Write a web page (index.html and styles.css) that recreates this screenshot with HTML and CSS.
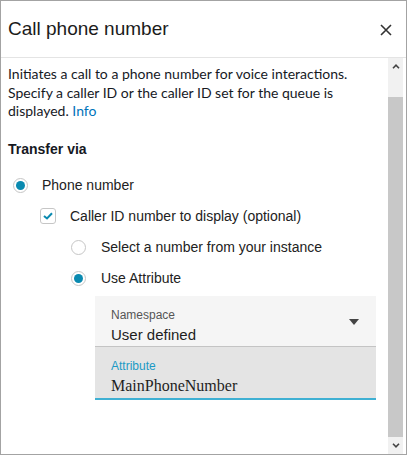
FILE: index.html
```html
<!DOCTYPE html>
<html>
<head>
<meta charset="utf-8">
<link rel="stylesheet" href="styles.css">
</head>
<body>
<div class="panel">
  <div class="header">
    <div class="title">Call phone number</div>
    <svg class="close" width="12" height="12" viewBox="0 0 12 12"><path d="M1 1L11 11M11 1L1 11" stroke="#333" stroke-width="1.6" fill="none"/></svg>
  </div>
  <div class="main">
    <div class="content">
      <p class="desc">Initiates a call to a phone number for voice interactions. Specify a caller ID or the caller ID set for the queue is displayed. <span class="link">Info</span></p>
      <div class="heading">Transfer via</div>
      <div class="row lvl1"><span class="radio on"></span><span class="label">Phone number</span></div>
      <div class="row lvl2"><span class="check"><svg width="10" height="8" viewBox="0 0 10 8"><path d="M1 4L4 6.5L9 1.2" stroke="#0a8ab0" stroke-width="2" fill="none"/></svg></span><span class="label">Caller ID number to display (optional)</span></div>
      <div class="row lvl3"><span class="radio"></span><span class="label">Select a number from your instance</span></div>
      <div class="row lvl3"><span class="radio on"></span><span class="label">Use Attribute</span></div>
      <div class="fields">
        <div class="field select">
          <div class="flabel">Namespace</div>
          <div class="fvalue">User defined</div>
          <span class="caret"></span>
        </div>
        <div class="field input">
          <div class="flabel">Attribute</div>
          <div class="fvalue serif">MainPhoneNumber</div>
        </div>
      </div>
    </div>
    <div class="scrollbar">
      <div class="sb-btn"><svg width="8" height="5" viewBox="0 0 8 5"><path d="M1 4.2L4 1.2L7 4.2" stroke="#444" stroke-width="1.6" fill="none"/></svg></div>
      <div class="sb-space"></div>
      <div class="sb-thumb"></div>
      <div class="sb-btn down"><svg width="8" height="5" viewBox="0 0 8 5"><path d="M1 0.8L4 3.8L7 0.8" stroke="#444" stroke-width="1.6" fill="none"/></svg></div>
    </div>
  </div>
</div>
</body>
</html>
```

FILE: styles.css
```css
html, body {
  margin: 0;
  padding: 0;
  background: #fff;
}
body {
  font-family: "Liberation Sans", Arial, sans-serif;
  color: #16191f;
}
.panel {
  width: 405px;
  height: 453px;
  border: 1px solid #a3a3a3;
  display: flex;
  flex-direction: column;
  overflow: hidden;
}
.header {
  height: 56px;
  flex: none;
  border-bottom: 1px solid #e4e4e4;
  display: flex;
  align-items: center;
  justify-content: space-between;
  padding: 0 14px 0 7px;
}
.title {
  font-size: 19px;
  color: #1b1b1b;
}
.close {
  display: block;
  margin-top: 1px;
}
.main {
  flex: 1;
  display: flex;
  min-height: 0;
}
.content {
  flex: 1;
  padding: 7px 0 0 7px;
}
.desc {
  margin: 0;
  font-family: Lato, "Liberation Sans", sans-serif;
  font-size: 14px;
  line-height: 18.5px;
  color: #16191f;
  padding-right: 8px;
}
.link {
  color: #0073bb;
}
.heading {
  margin-top: 19px;
  font-weight: bold;
  font-size: 14px;
  line-height: 18px;
}
.row {
  height: 31px;
  display: flex;
  align-items: center;
  font-size: 14px;
  color: #222;
}
.heading + .row {
  margin-top: 12px;
}
.lvl1 { padding-left: 5px; }
.lvl2 { padding-left: 32px; }
.lvl3 { padding-left: 63px; }
.radio {
  width: 15px;
  height: 15px;
  box-sizing: border-box;
  border: 1px solid #c6c6c6;
  border-radius: 50%;
  background: #fff;
  margin-right: 14px;
  display: flex;
  align-items: center;
  justify-content: center;
  flex: none;
}
.radio.on::after {
  content: "";
  width: 9px;
  height: 9px;
  border-radius: 50%;
  background: #0a8ab0;
}
.lvl3 .radio { margin-right: 15px; }
.check {
  width: 16px;
  height: 16px;
  box-sizing: border-box;
  border: 1px solid #c6c6c6;
  border-radius: 3px;
  margin-right: 14px;
  display: flex;
  align-items: center;
  justify-content: center;
  flex: none;
}
.check svg { display: block; }
.fields {
  margin: 2px 0 0 87px;
  width: 281px;
}
.field {
  position: relative;
  box-sizing: border-box;
  padding: 12px 16px 0 16px;
}
.select {
  height: 51px;
  background: #f5f5f5;
  border-bottom: 1px solid #c4c4c4;
}
.input {
  height: 53px;
  background: #e4e4e4;
  border-bottom: 2px solid #3fb0d3;
}
.flabel {
  font-size: 12px;
  line-height: 14px;
  color: #555;
}
.input .flabel {
  color: #1c9ac5;
}
.fvalue {
  font-size: 15px;
  line-height: 20px;
  margin-top: 3px;
  color: #1e1e1e;
}
.serif {
  font-family: "Liberation Serif", "Times New Roman", serif;
  font-size: 16px;
  margin-top: 3px;
}
.caret {
  position: absolute;
  right: 17px;
  top: 23px;
  width: 0;
  height: 0;
  border-left: 5px solid transparent;
  border-right: 5px solid transparent;
  border-top: 6px solid #444;
}
.scrollbar {
  width: 15px;
  margin-right: 3px;
  background: #f1f1f1;
  display: flex;
  flex-direction: column;
  flex: none;
}
.sb-btn {
  height: 17px;
  display: flex;
  align-items: center;
  justify-content: center;
  flex: none;
}
.sb-space {
  height: 22px;
  flex: none;
}
.sb-thumb {
  flex: 1;
  background: #c8c8c8;
}
```
